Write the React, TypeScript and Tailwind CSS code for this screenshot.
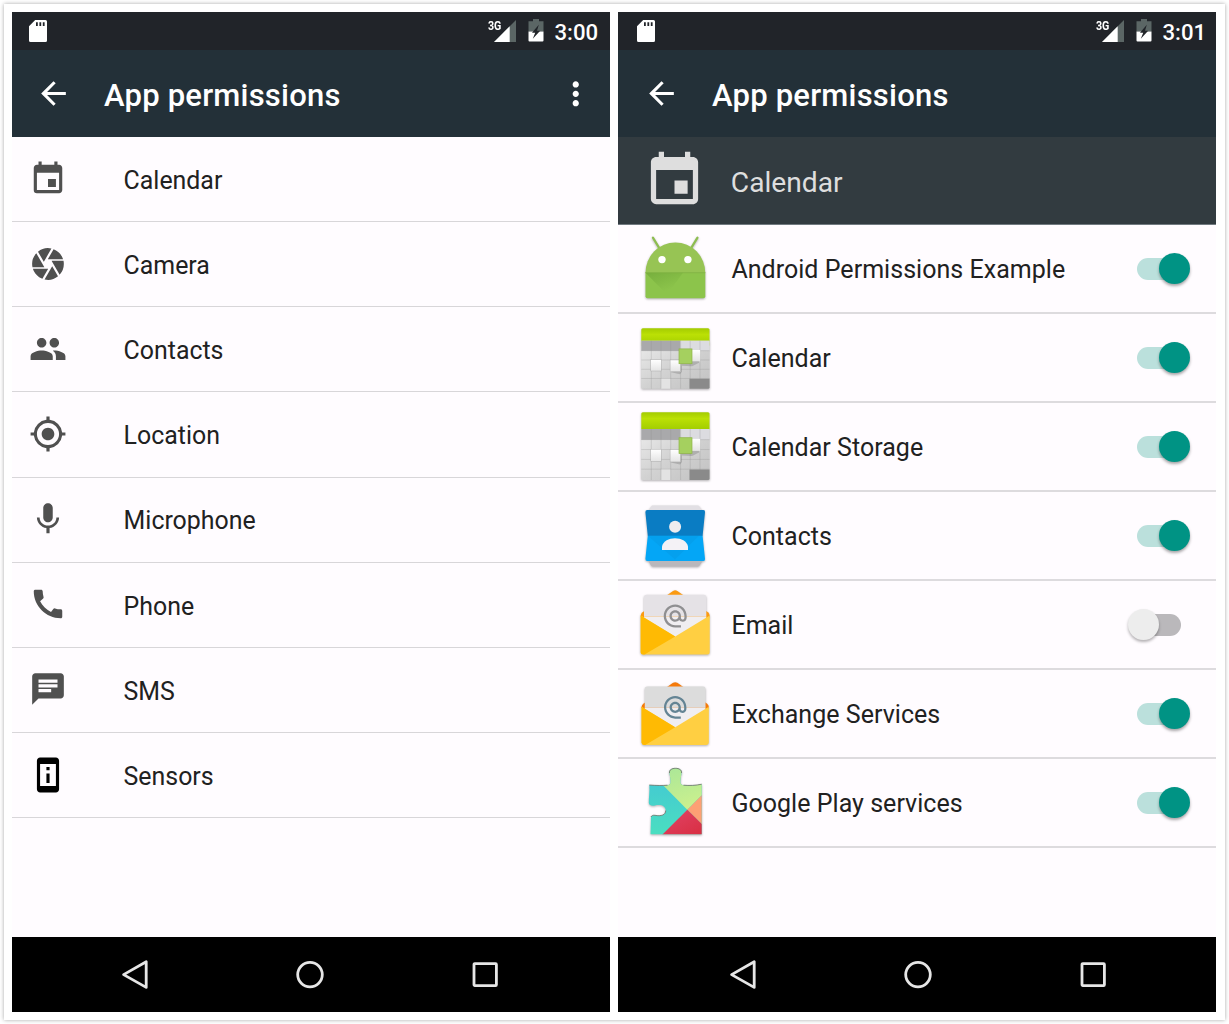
import type { ReactNode } from 'react';
import type { IconType } from 'react-icons';
import {
  MdAlternateEmail,
  MdArrowBack,
  MdCall,
  MdCamera,
  MdChat,
  MdEvent,
  MdMic,
  MdMoreVert,
  MdMyLocation,
  MdPeople,
  MdPermDeviceInformation,
} from 'react-icons/md';

function StatusBar({ time }: { time: string }) {
  return (
    <div className="flex h-[38px] shrink-0 items-center bg-[#212429] pl-[19px]">
      <svg width="18" height="22" viewBox="0 0 18 22">
        <path
          fill="#fff"
          fillRule="evenodd"
          d="M6.2 0H16.5Q18 0 18 1.5V20.5Q18 22 16.5 22H1.5Q0 22 0 20.5V6.2ZM7 2.2V6H8.8V2.2ZM10.4 2.2V6H12.2V2.2ZM13.8 2.2V6H15.6V2.2Z"
        />
      </svg>
      <div className="relative ml-[445.5px] h-[22px] w-[23px]">
        <svg width="23" height="22" viewBox="0 0 23 22">
          <path d="M23 0V22H1Z" fill="#5b6665" />
          <path d="M16.7 6.3V22H1Z" fill="#fff" />
        </svg>
        <span className="absolute -top-[1px] -left-[5px] origin-left scale-x-[0.82] text-[13px] leading-[13px] font-bold text-white">
          3G
        </span>
      </div>
      <svg width="16" height="23" viewBox="0 0 16 23" className="mb-px ml-[12.5px]">
        <path d="M5 0H11V2.3H15.5V12.5H0.5V2.3H5Z" fill="#5b6665" />
        <path d="M0.5 12.5H15.5V21.5Q15.5 22.5 14.5 22.5H1.5Q0.5 22.5 0.5 21.5Z" fill="#fff" />
        <path d="M10.8 5.8 4 13.8H7.2L4.8 19.8 12.2 11.8H9Z" fill="#212429" />
      </svg>
      <span className="ml-[10.5px] pt-[2px] text-[22.2px] leading-none font-medium text-white">{time}</span>
    </div>
  );
}

function Toolbar({ menu }: { menu?: boolean }) {
  return (
    <div className="flex h-[87px] shrink-0 items-center bg-[#233038] pr-[16px] pl-[25.4px] text-white">
      <MdArrowBack size={37} />
      <h1 className="ml-[31.6px] pt-[4px] text-[31px] leading-none font-medium tracking-[0.22px] whitespace-nowrap">
        App permissions
      </h1>
      {menu && <MdMoreVert size={37.5} className="ml-auto" />}
    </div>
  );
}

function NavBar() {
  return (
    <div className="mt-auto flex h-[75px] shrink-0 items-center bg-black pl-[110px]">
      <svg width="30" height="32" viewBox="0 0 30 32" fill="none" stroke="#e6e6e6" strokeWidth="2.8" strokeLinejoin="round">
        <path d="M26.2 2.8V28.4L3.6 15.6Z" />
      </svg>
      <svg width="30" height="30" viewBox="0 0 30 30" fill="none" stroke="#e6e6e6" strokeWidth="2.8" className="ml-[145px]">
        <circle cx="15" cy="14.6" r="12.3" />
      </svg>
      <svg width="30" height="30" viewBox="0 0 30 30" fill="none" stroke="#e6e6e6" strokeWidth="2.8" className="ml-[145px]">
        <rect x="4" y="3.6" width="22.4" height="22" rx="0.8" />
      </svg>
    </div>
  );
}

function Switch({ on }: { on: boolean }) {
  return (
    <div className="relative mr-[37px] ml-auto h-[22px] w-[44px]">
      <div className={on ? 'h-full rounded-full bg-[#bbe0dc]' : 'h-full rounded-full bg-[#bab8bb]'} />
      <div
        className={
          on
            ? 'absolute -top-[4.5px] left-[22px] size-[31px] rounded-full bg-[#009384] shadow-[0_2px_3px_rgba(0,0,0,0.35)]'
            : 'absolute -top-[4.5px] -left-[9.5px] size-[31px] rounded-full bg-[#ededed] shadow-[0_2px_3px_rgba(0,0,0,0.3)]'
        }
      />
    </div>
  );
}

function AppIcon({ children }: { children: ReactNode }) {
  return (
    <svg width="72" height="72" viewBox="0 0 72 72" className="shrink-0 drop-shadow-[0_1px_1px_rgba(0,0,0,0.3)]">
      {children}
    </svg>
  );
}

function AndroidIcon() {
  return (
    <AppIcon>
      <defs>
        <linearGradient id="fold" x1="0.1" y1="0" x2="0.6" y2="0.8">
          <stop offset="0" stopColor="#78b03e" />
          <stop offset="1" stopColor="#8cc44b" />
        </linearGradient>
      </defs>
      <path d="M13.9 4.6 20.6 15.6M58.5 4.6 51.8 15.6" stroke="#8dbd50" strokeWidth="2.2" strokeLinecap="round" />
      <path d="M6.5 40A29.9 30.6 0 0 1 66.3 40Z" fill="#97c454" />
      <path d="M6.5 39.6H66.3V63.3Q66.3 65.3 64.3 65.3H8.5Q6.5 65.3 6.5 63.3Z" fill="#8cc44b" />
      <path d="M6.5 39.8H44L28 61.5Z" fill="url(#fold)" />
      <path d="M6.5 39.7H66.3" stroke="#7fb044" strokeWidth="0.7" />
      <circle cx="23" cy="26.6" r="3.7" fill="#fff" />
      <circle cx="48.9" cy="26.6" r="3.7" fill="#fff" />
    </AppIcon>
  );
}

function CalendarIcon({ tall }: { tall?: boolean }) {
  const top = tall ? 1.3 : 6.3;
  const bodyTop = tall ? 18 : 18.7;
  const id = tall ? 'tall' : 'short';
  return (
    <AppIcon>
      <defs>
        <linearGradient id={`green-${id}`} x1="0" y1="0" x2="0" y2="1">
          <stop offset="0" stopColor="#a4cc00" />
          <stop offset="0.35" stopColor="#bbe005" />
          <stop offset="1" stopColor="#a0cc00" />
        </linearGradient>
        <linearGradient id={`grey-${id}`} x1="0" y1="0" x2="1" y2="1">
          <stop offset="0" stopColor="#ececec" />
          <stop offset="0.5" stopColor="#d2d2d2" />
          <stop offset="1" stopColor="#c2c2c2" />
        </linearGradient>
        <linearGradient id={`cell-${id}`} x1="0" y1="0" x2="0" y2="1">
          <stop offset="0" stopColor="#fff" />
          <stop offset="1" stopColor="#e4e4e4" />
        </linearGradient>
      </defs>
      <rect x="2.3" y={top} width="68.2" height="18" rx="1.5" fill={`url(#green-${id})`} />
      <g transform={`translate(0 ${bodyTop}) scale(1 ${tall ? 1.063 : 1})`}>
        <path d="M2.3 0H70.5V46.5Q70.5 48 69 48H3.8Q2.3 48 2.3 46.5Z" fill={`url(#grey-${id})`} />
        <path d="M2.3 0H41.5V10H2.3Z" fill="#a9a9ab" />
        <path d="M41.5 0H70.5V10H41.5Z" fill="#dcdce0" />
        <path d="M50.5 38H70.5V46.5Q70.5 48 69 48H50.5Z" fill="#8a8a8a" />
        <path d="M22 37.6H31.7V48H22Z" fill="#e3e3e3" />
        <path
          d="M12.3 0V48M22 0V48M31.7 0V48M41.6 0V48M51.2 0V48M61 0V48M2.3 10H70.5M2.3 19.3H70.5M2.3 28.6H70.5M2.3 37.8H70.5"
          stroke="#8d8d8d"
          strokeOpacity="0.45"
          strokeWidth="0.6"
        />
        <path d="M32 31.5 41 33.5 43 31 43 25 53 25.5 60 22V12L45 18Z" fill="#555" fillOpacity="0.25" />
        <rect x="52" y="9.3" width="9.2" height="11.3" fill={`url(#cell-${id})`} />
        <rect x="11.8" y="19" width="10.5" height="11.3" fill={`url(#cell-${id})`} stroke="#a5a5a5" strokeWidth="0.4" />
        <rect x="31.1" y="19.3" width="10.5" height="11.7" fill={`url(#cell-${id})`} stroke="#a5a5a5" strokeWidth="0.4" />
        <rect x="40" y="8.2" width="13" height="14.8" fill="#a5d05f" stroke="#8fb548" strokeWidth="0.7" />
      </g>
    </AppIcon>
  );
}

function ContactsIcon() {
  return (
    <AppIcon>
      <path d="M13 5.5H59.5L64 11H9Z" fill="#e2dfe4" />
      <path d="M9 60H64L60.5 65.5Q60 66.5 58.5 66.5H14Q12.5 66.5 12 65.5Z" fill="#b9b7bb" />
      <path d="M8.3 10H64.3Q66.4 10 66 12.2L63.6 35.9H8.8L6.4 12.2Q6.2 10 8.3 10Z" fill="#0a7cc3" />
      <path d="M8.8 35.7H63.6L66 58.8Q66.4 61 64.3 61H8.3Q6.2 61 6.4 58.8Z" fill="#04a6f6" />
      <path d="M8.8 35.7H60L36 59.5Z" fill="#0592dc" fillOpacity="0.3" />
      <circle cx="36.1" cy="26.8" r="6" fill="#eeecef" />
      <path d="M23 50V46.6C24 41 30 38.3 36 38.3S48 41 49 46.6V50Z" fill="#f4f2f6" />
    </AppIcon>
  );
}

function MailIcon({ exchange }: { exchange?: boolean }) {
  return (
    <AppIcon>
      <g transform={exchange ? 'translate(0.9 3.3) scale(0.975 0.98)' : 'translate(0 0.4)'}>
        <path
          d="M1.7 26.5Q1.8 24 3.5 22.8L34 1.6Q36.2 0.2 38.4 1.6L69 22.8Q70.6 24 70.7 26.5L68 34H4Z"
          fill={exchange ? '#f57a0a' : '#fb9a12'}
        />
        <path d="M7.5 5.3H64.8Q67.3 5.3 67.3 7.8V27H5V7.8Q5 5.3 7.5 5.3Z" fill={exchange ? '#dcdcdc' : '#e5e2e6'} />
        <path d="M5 27H67.3V48H5Z" fill="#f0eef1" />
        <MdAlternateEmail x={22.4} y={12.8} size={27.6} color={exchange ? '#648494' : '#8f8f91'} />
        <path d="M1.7 26 36.2 47 70.7 26V62.5Q70.7 65 68.2 65H4.2Q1.7 65 1.7 62.5Z" fill="#ffcf42" />
        <path d="M1.7 26 36.2 47 5.5 65H4.2Q1.7 65 1.7 62.5Z" fill="#ffba03" />
      </g>
    </AppIcon>
  );
}

function PlayServicesIcon() {
  return (
    <AppIcon>
      <defs>
        <clipPath id="puzzle">
          <path d="M10.3 18C17 18.6 24 18.6 28.5 18.2 31 17.9 32 16 31.6 13.5L30.5 6C30 2.8 33 1.3 36.5 1.3S43 2.8 42.5 6L41.4 13.5C41 16 42 17.9 44.5 18.2 50 18.7 57 18.5 62.7 17.2V67.3H11.5L12 50C12.4 48.6 14 48 16 48.3 22 49.5 26.7 48 26.7 43.5S22 37 16 38.5C13 39.2 10 38.5 9.8 36 9.6 31 10.9 24 10.3 18Z" />
        </clipPath>
        <linearGradient id="teal" x1="0" y1="0" x2="0" y2="1">
          <stop offset="0" stopColor="#42c5d6" />
          <stop offset="1" stopColor="#4be0bf" />
        </linearGradient>
        <linearGradient id="lime" x1="0" y1="0" x2="0.5" y2="1">
          <stop offset="0" stopColor="#a5e59a" />
          <stop offset="1" stopColor="#caf08e" />
        </linearGradient>
        <linearGradient id="crimson" x1="0" y1="0" x2="1" y2="1">
          <stop offset="0" stopColor="#e2456a" />
          <stop offset="1" stopColor="#d62a3a" />
        </linearGradient>
      </defs>
      <g clipPath="url(#puzzle)">
        <path d="M0 0H72V72H0Z" fill="url(#teal)" />
        <path d="M6 0H72V19L48.3 42.7Z" fill="url(#lime)" />
        <path d="M72 19V66L48.3 42.7Z" fill="#fda074" />
        <path d="M48.3 42.7 72 66V72H19Z" fill="url(#crimson)" />
      </g>
      <path
        d="M10.3 18C17 18.6 24 18.6 28.5 18.2M44.5 18.2C50 18.7 57 18.5 62.7 17.2M30.5 6C30 2.8 33 1.3 36.5 1.3S43 2.8 42.5 6M12 50C12.4 48.6 14 48 16 48.3 22 49.5 26.7 48 26.7 43.5"
        fill="none"
        stroke="#6d6a60"
        strokeOpacity="0.75"
        strokeWidth="1"
      />
    </AppIcon>
  );
}

const groups: { label: string; icon: IconType; dark?: boolean }[] = [
  { label: 'Calendar', icon: MdEvent },
  { label: 'Camera', icon: MdCamera },
  { label: 'Contacts', icon: MdPeople },
  { label: 'Location', icon: MdMyLocation },
  { label: 'Microphone', icon: MdMic },
  { label: 'Phone', icon: MdCall },
  { label: 'SMS', icon: MdChat },
  { label: 'Sensors', icon: MdPermDeviceInformation, dark: true },
];

const apps: { label: string; icon: ReactNode; on: boolean }[] = [
  { label: 'Android Permissions Example', icon: <AndroidIcon />, on: true },
  { label: 'Calendar', icon: <CalendarIcon />, on: true },
  { label: 'Calendar Storage', icon: <CalendarIcon tall />, on: true },
  { label: 'Contacts', icon: <ContactsIcon />, on: true },
  { label: 'Email', icon: <MailIcon />, on: false },
  { label: 'Exchange Services', icon: <MailIcon exchange />, on: true },
  { label: 'Google Play services', icon: <PlayServicesIcon />, on: true },
];

export default function App() {
  return (
    <div className="h-[1024px] w-[1229px] overflow-hidden bg-white p-1 font-[Roboto,sans-serif]">
      <div className="flex h-[1016px] w-[1221px] gap-2 bg-white p-2 shadow-[0_0_4px_rgba(0,0,0,0.35)]">
        <section className="h-[1000px] w-[598px] overflow-hidden bg-[#fffcff]">
          <div className="-ml-0.5 flex h-full w-[600px] flex-col">
            <StatusBar time="3:00" />
            <Toolbar menu />
            <ul>
              {groups.map(({ label, icon: Icon, dark }) => (
                <li key={label} className="flex h-[85.15px] items-center border-b border-[#d8d6d9] pl-[19.3px]">
                  <Icon size={38} className={dark ? 'mb-[1px] text-black' : 'mb-[1px] text-[#505050]'} />
                  <span className="ml-[56.3px] pt-[4.4px] text-[24.9px] leading-none text-[#212121]">{label}</span>
                </li>
              ))}
            </ul>
            <NavBar />
          </div>
        </section>
        <section className="flex h-[1000px] w-[598px] flex-col overflow-hidden bg-[#fffcff]">
          <div className="flex h-full w-[600px] flex-col">
            <StatusBar time="3:01" />
            <Toolbar />
            <div className="flex h-[88px] shrink-0 items-center border-b border-[#717a80] bg-[#323b40] pl-[24.8px] text-[#dedede]">
              <MdEvent size={63} />
              <span className="ml-[25px] pt-[5px] text-[28.2px] leading-none">Calendar</span>
            </div>
            <ul>
              {apps.map(({ label, icon, on }) => (
                <li key={label} className="flex h-[89.05px] items-center border-b-2 border-[#dddbde] pl-[21px]">
                  {icon}
                  <span className="ml-[20.4px] pt-[2px] text-[25px] leading-none tracking-[0.03px] text-[#212121]">
                    {label}
                  </span>
                  <Switch on={on} />
                </li>
              ))}
            </ul>
            <NavBar />
          </div>
        </section>
      </div>
    </div>
  );
}
